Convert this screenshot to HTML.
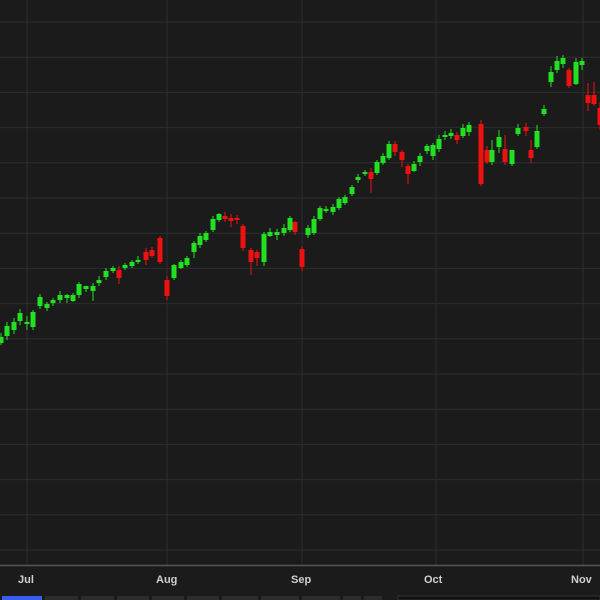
<!DOCTYPE html><html><head><style>
html,body{margin:0;padding:0;background:#1b1b1b;width:600px;height:600px;overflow:hidden;font-family:"Liberation Sans",sans-serif}
</style></head><body>
<svg id="s" width="600" height="600" xmlns="http://www.w3.org/2000/svg" style="position:absolute;left:0;top:0">
<rect width="600" height="600" fill="#1b1b1b"/>
<g id="grid" stroke="#2e2e2e" stroke-width="1"></g>
<g id="c"></g>
<line x1="0" y1="565.5" x2="600" y2="565.5" stroke="#555" stroke-width="1.5"/>
<g fill="#cfcfcf" font-size="11" font-weight="bold">
<text x="18" y="583">Jul</text><text x="156" y="583">Aug</text><text x="291" y="583">Sep</text><text x="424" y="583">Oct</text><text x="571" y="583">Nov</text>
</g>
<rect x="2" y="596" width="40" height="4" fill="#3a5cf0"/>
<g fill="#2c2c2c">
<rect x="45" y="596" width="33" height="4"/><rect x="81" y="596" width="33" height="4"/><rect x="117" y="596" width="32" height="4"/><rect x="152" y="596" width="32" height="4"/><rect x="187" y="596" width="32" height="4"/><rect x="222" y="596" width="36" height="4"/><rect x="261" y="596" width="38" height="4"/><rect x="302" y="596" width="38" height="4"/><rect x="343" y="596" width="18" height="4"/><rect x="364" y="596" width="18" height="4"/>
</g>
<rect x="398" y="596" width="202" height="4" fill="#111" stroke="#333"/>
</svg>
<script>
var g=document.getElementById('grid'),h='';
for(var i=0;i<16;i++){var y=(22+35.2*i).toFixed(1);h+='<line x1="0" x2="600" y1="'+y+'" y2="'+y+'"/>';}
[27,167,302,436,583].forEach(function(x){h+='<line y1="0" y2="565" x1="'+x+'" x2="'+x+'"/>';});
g.innerHTML=h;
var d=[[1,343,337,345,333],[7,336,326,340,322],[14,330,322,334,318],[20,321,313,325,309],[27,324,322,330,316],[33,327,312,330,310],[40,306,297,309,294],[47,308,304,311,302],[53,303,300,306,298],[60,300,295,303,291],[67,298,295,303,294],[73,301,295,302,293],[79,295,284,298,282],[86,289,286,292,286],[93,291,286,301,283],[99,283,280,286,276],[106,277,271,280,268],[113,271,268,273,266],[119,270,278,284,266],[125,268,265,270,263],[132,266,262,268,260],[138,262,260,264,256],[146,252,260,265,248],[152,250,256,258,247],[160,238,262,264,236],[167,280,296,300,276],[174,278,265,280,264],[181,268,262,269,260],[187,265,258,267,256],[194,252,243,258,241],[200,245,236,248,233],[206,240,233,242,231],[213,230,219,232,216],[219,220,214,222,213],[225,216,219,222,212],[231,218,221,227,214],[237,218,220,224,215],[243,226,248,251,224],[251,250,262,275,248],[257,252,258,266,250],[264,262,234,266,232],[270,236,232,237,228],[277,235,232,240,229],[284,233,228,236,224],[290,230,218,232,216],[295,222,232,235,221],[302,249,267,271,246],[308,235,228,238,225],[314,233,219,235,216],[320,219,208,221,206],[326,211,209,213,206],[333,212,207,215,204],[339,208,199,210,197],[345,203,197,205,195],[352,194,187,196,185],[358,180,177,183,174],[365,174,172,176,170],[371,172,179,193,168],[377,173,162,175,160],[383,163,156,165,153],[389,158,144,160,141],[395,144,152,156,141],[402,152,160,167,150],[408,166,174,184,164],[414,171,164,172,161],[420,162,156,166,153],[427,151,146,154,144],[433,156,145,160,143],[439,149,139,152,135],[445,137,135,140,131],[451,136,133,139,129],[457,135,140,144,132],[463,136,128,138,124],[469,132,125,136,122],[481,124,184,186,120],[487,150,162,164,146],[492,162,150,165,140],[499,147,137,153,130],[505,149,162,165,135],[512,164,150,166,150],[518,134,128,136,124],[526,127,131,136,123],[531,150,158,163,140],[537,147,131,149,125],[544,114,109,116,105],[551,82,72,87,66],[557,70,61,73,56],[563,64,58,68,55],[569,70,86,88,68],[576,84,62,85,58],[582,65,61,70,58],[588,95,103,111,83],[594,95,104,106,82],[600,108,125,130,102]];
var c='';
d.forEach(function(a){var x=a[0],o=a[1],cl=a[2],col=cl<o?'#22e022':'#ee1111';
var t=Math.min(o,cl),b=Math.max(o,cl);if(b-t<2){b=t+2;}
c+='<line x1="'+x+'" x2="'+x+'" y1="'+a[3]+'" y2="'+a[4]+'" stroke="'+col+'" stroke-width="1"/>';
c+='<rect x="'+(x-2.5)+'" y="'+t+'" width="5" height="'+(b-t)+'" fill="'+col+'"/>';});
document.getElementById('c').innerHTML=c;
</script>
</body></html>
